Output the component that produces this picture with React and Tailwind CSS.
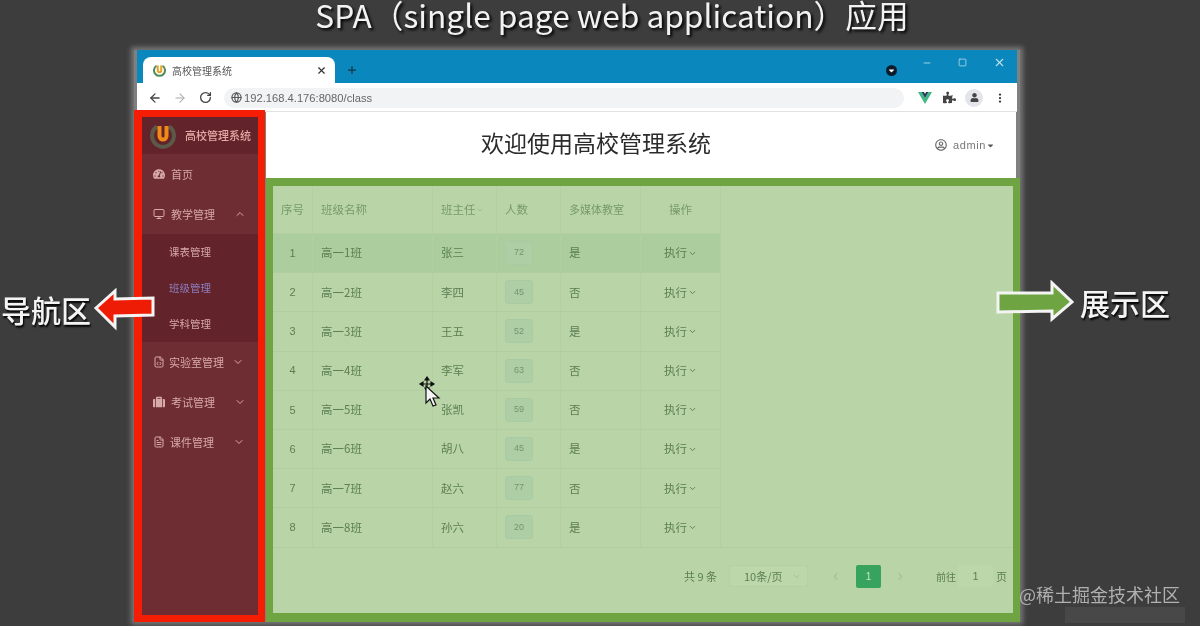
import { ArrowLeft, ArrowRight, ChevronDown, ChevronLeft, ChevronRight, ChevronUp, FileCode, FileText, Globe, Minus, Monitor, MoreVertical, Plus, RotateCw, Square, X } from 'lucide-react'
import { FaCaretDown, FaPuzzlePiece, FaRegUserCircle, FaSuitcase, FaTachometerAlt, FaUser } from 'react-icons/fa'

const cjk = "font-['Noto_Sans_CJK_SC','Noto_Sans',sans-serif]"

const rows = [
    ['1', '高一1班', '张三', '72', '是'],
    ['2', '高一2班', '李四', '45', '否'],
    ['3', '高一3班', '王五', '52', '是'],
    ['4', '高一4班', '李军', '63', '否'],
    ['5', '高一5班', '张凯', '59', '否'],
    ['6', '高一6班', '胡八', '45', '是'],
    ['7', '高一7班', '赵六', '77', '否'],
    ['8', '高一8班', '孙六', '20', '是'],
]

const Logo = ({ size }) => (
    <svg width={size} height={size} viewBox="0 0 26 26" className="shrink-0">
        <path d="M7 3.5 A11 11 0 1 0 19 3.5" fill="none" stroke="#5b5a48" strokeWidth="4" />
        <path d="M9.5 3v10a3.5 3.5 0 0 0 7 0V3" fill="none" stroke="#ef8a17" strokeWidth="4" />
    </svg>
)

const Tab = () => (
    <div className="flex h-[26px] w-[192px] items-center rounded-t-lg bg-white pl-[10px] pr-[8px]">
        <svg width="13" height="13" viewBox="0 0 26 26" className="shrink-0">
            <path d="M7 3.5 A11 11 0 1 0 19 3.5" fill="none" stroke="#4f8a5b" strokeWidth="4" />
            <path d="M9.5 3v10a3.5 3.5 0 0 0 7 0V3" fill="none" stroke="#e9a11d" strokeWidth="4" />
        </svg>
        <span className="ml-[6px] flex-1 text-[10px] text-[#555]">高校管理系统</span>
        <X size={11} strokeWidth={2.5} className="text-[#333]" />
    </div>
)

const Chrome = () => (
    <div className="mx-[3px]">
        <div className="flex h-[33px] items-end bg-[#0a87bd] pl-[6px]">
            <Tab />
            <Plus size={12} strokeWidth={2.5} className="mb-[7px] ml-[11px] text-[#12354a]" />
            <div className="mb-[7px] ml-[528px] flex h-[11px] w-[11px] items-center justify-center rounded-full bg-[#0c1c2c]">
                <FaCaretDown size={9} className="text-white" />
            </div>
            <div className="mb-[14px] ml-[25px] flex items-center gap-[26px] text-[#bfe0ee]">
                <Minus size={10} />
                <Square size={9} />
                <X size={13} />
            </div>
        </div>
        <div className="flex h-[29px] items-center border-b border-[#e2e2e2] bg-white pl-[11px] pr-[10px] pt-px">
            <ArrowLeft size={14} strokeWidth={2.2} className="text-[#444]" />
            <ArrowRight size={14} strokeWidth={1.8} className="ml-[11px] text-[#aaa]" />
            <RotateCw size={13} strokeWidth={2.4} className="ml-[12px] text-[#444]" />
            <div className="ml-[12px] flex h-[20px] w-[680px] items-center gap-[2px] rounded-full bg-[#f1f3f4] pl-[7px]">
                <Globe size={11} strokeWidth={2.5} className="text-[#555]" />
                <span className="mt-px font-['Liberation_Sans',sans-serif] text-[11.2px] text-[#666]">192.168.4.176:8080/class</span>
            </div>
            <svg width="14" height="12" viewBox="0 0 14 12" className="ml-[14px]">
                <path d="M0 0h3.5L7 6l3.5-6H14L7 12z" fill="#41b883" />
                <path d="M3.5 0H6l1 2 1-2h2.500L7 6z" fill="#21405a" />
            </svg>
            <FaPuzzlePiece size={13} className="ml-[11px] text-[#444]" />
            <div className="ml-[9px] flex h-[18px] w-[18px] items-center justify-center rounded-full bg-[#e3e5ea]">
                <FaUser size={9} className="text-[#444]" />
            </div>
            <MoreVertical size={12} strokeWidth={2.5} className="ml-[11px] text-[#333]" />
        </div>
    </div>
)

const MenuItem = ({ icon: Icon, label, open, gap = 'ml-[6px]' }) => (
    <div className="flex h-[40px] items-center pl-[11px] text-[11px] text-[#d8a9a9]">
        <Icon size={12} className="shrink-0" />
        <span className={`${gap} w-[58px] whitespace-nowrap`}>{label}</span>
        {open === true && <ChevronUp size={12} className="ml-[5px]" />}
        {open === false && <ChevronDown size={12} className="ml-[5px]" />}
    </div>
)

const Sidebar = () => (
    <aside className="-mt-[2px] w-[131px] shrink-0 border-x-[8px] border-y-[7px] border-x-[#f61d05] border-y-[#f61d05] bg-[#6e2c33] [border-right-width:7px]">
        <div className="flex h-[37px] items-center bg-[#62232a] pl-[8px]">
            <Logo size={26} />
            <span className="ml-[9px] whitespace-nowrap text-[11px] font-medium text-[#e3a9a4]">高校管理系统</span>
        </div>
        <MenuItem icon={FaTachometerAlt} label="首页" />
        <MenuItem icon={Monitor} label="教学管理" open={true} />
        <div className="bg-[#62232a] pl-[27px] text-[10.5px] text-[#d8a9a9]">
            <div className="flex h-[36px] items-center">课表管理</div>
            <div className="flex h-[36px] items-center text-[#8d7fc0]">班级管理</div>
            <div className="flex h-[36px] items-center">学科管理</div>
        </div>
        <MenuItem icon={FileCode} label="实验室管理" open={false} gap="ml-[4px]" />
        <MenuItem icon={FaSuitcase} label="考试管理" open={false} />
        <MenuItem icon={FileText} label="课件管理" open={false} gap="ml-[5px]" />
    </aside>
)

const Header = () => (
    <div className="mr-[4px] flex h-[66px] items-center bg-white pl-[215px] pr-[21px]">
        <h1 className="mb-[6px] flex-1 whitespace-nowrap text-[23px] leading-none text-[#2b2b2b]">欢迎使用高校管理系统</h1>
        <FaRegUserCircle size={12} className="text-[#666]" />
        <span className="ml-[6px] font-['Liberation_Sans',sans-serif] text-[11px] tracking-[0.6px] text-[#777]">admin</span>
        <FaCaretDown size={9} className="text-[#555]" />
    </div>
)

const cols = 'grid grid-cols-[40px_120px_64px_64px_80px_80px]'

const Table = () => (
    <div className="w-[448px] text-[11.5px] text-[#5b7f52]">
        <div className={`${cols} h-[47px] items-center text-[#769a6b]`}>
            <div className="flex h-full items-center justify-center border-r border-[#b2d0a1]">序号</div>
            <div className="flex h-full items-center border-r border-[#b2d0a1] pl-[8px]">班级名称</div>
            <div className="flex h-full items-center border-r border-[#b2d0a1] pl-[8px]">
                班主任<ChevronDown size={8} className="opacity-60" />
            </div>
            <div className="flex h-full items-center border-r border-[#b2d0a1] pl-[8px]">人数</div>
            <div className="flex h-full items-center border-r border-[#b2d0a1] pl-[8px] text-[11px]">多媒体教室</div>
            <div className="flex h-full items-center justify-center border-r border-[#b2d0a1]">操作</div>
        </div>
        {rows.map((row, i) => (
            <div key={row[0]} className={`${cols} h-[39.2px] items-center border-t border-[#b0ce9f] ${i === 0 ? 'bg-[#acce9e]' : ''}`}>
                <div className="flex h-full items-center justify-center border-r border-[#b2d0a1] font-['Liberation_Sans',sans-serif] text-[11px]">{row[0]}</div>
                <div className="flex h-full items-center border-r border-[#b2d0a1] pl-[8px]">{row[1]}</div>
                <div className="flex h-full items-center border-r border-[#b2d0a1] pl-[8px]">{row[2]}</div>
                <div className="flex h-full items-center border-r border-[#b2d0a1] pl-[8px]">
                    <span className="flex h-[24px] w-[28px] items-center justify-center rounded-[3px] border border-[#a9cba3] bg-[#aecfa6] font-['Liberation_Sans',sans-serif] text-[9px] text-[#6f9770]">{row[3]}</span>
                </div>
                <div className="flex h-full items-center border-r border-[#b2d0a1] pl-[8px]">{row[4]}</div>
                <div className="flex h-full items-center justify-center border-r border-[#b2d0a1]">
                    执行<ChevronDown size={9} strokeWidth={2.5} className="ml-[1px]" />
                </div>
            </div>
        ))}
    </div>
)

const Pagination = () => (
    <div className="flex flex-1 items-center justify-end border-t border-[#b0ce9f] pb-[8px] pr-[6px] text-[11px] text-[#5b7f52]">
        <span>共 9 条</span>
        <div className="ml-[12px] flex h-[22px] w-[79px] items-center rounded-[2px] border border-[#b3d1a3] bg-[#bcd8ab] pl-[14px] pr-[6px]">
            <span className="flex-1">10条/页</span>
            <ChevronDown size={9} className="text-[#97b98b]" />
        </div>
        <ChevronLeft size={11} strokeWidth={2.5} className="ml-[22px] text-[#a2c296]" />
        <div className="ml-[15px] flex h-[23px] w-[25px] items-center justify-center rounded-[2px] bg-[#37a35c] font-['Liberation_Sans',sans-serif] text-[10px] text-[#c7e5c4]">1</div>
        <ChevronRight size={11} strokeWidth={2.5} className="ml-[14px] text-[#a2c296]" />
        <span className="ml-[30px] text-[10px]">前往</span>
        <div className="ml-[2px] flex h-[22px] w-[35px] items-center justify-center rounded-[2px] bg-[#bcd8ab] font-['Liberation_Sans',sans-serif] text-[11px]">1</div>
        <span className="ml-[3px]">页</span>
    </div>
)

const App = () => (
    <div className={`relative flex h-[626px] w-[1200px] flex-col overflow-hidden bg-[#3d3d3d] blur-[0.4px] ${cjk}`}>
        <div className="flex h-[50px] shrink-0 justify-center pl-[24px]">
            <h1 className="whitespace-nowrap text-[31.7px] leading-[29px] text-[#f2f2f2] [text-shadow:2px_2px_3px_#000]">SPA（single page web application）应用</h1>
        </div>
        <div className="flex h-[572px] shrink-0">
            <div className="flex w-[134px] shrink-0 items-center justify-end pb-[54px] pr-[43px]">
                <span className="whitespace-nowrap text-[30px] font-medium leading-none text-[#f4f4f4] [text-shadow:1px_2px_2px_#000]">导航区</span>
            </div>
            <div className="flex w-[886px] shrink-0 flex-col bg-[#808080] shadow-[0_0_5px_3px_rgba(190,190,190,0.45)]">
                <Chrome />
                <div className="flex min-h-0 flex-1">
                    <Sidebar />
                    <div className="flex min-w-0 flex-1 flex-col pl-px">
                        <Header />
                        <div className="flex min-h-0 flex-1 flex-col border-x-[7px] border-t-[8px] border-b-[9px] border-[#6ea542] bg-[#b9d5a8]">
                            <Table />
                            <Pagination />
                        </div>
                    </div>
                </div>
            </div>
            <div className="flex flex-1 items-center pb-[68px] pl-[60px]">
                <span className="whitespace-nowrap text-[30px] font-medium leading-none text-[#f4f4f4] [text-shadow:1px_2px_2px_#000]">展示区</span>
            </div>
        </div>

        <svg width="64" height="44" viewBox="0 0 64 44" className="absolute left-[93px] top-[288px]">
            <path d="M3 20 L22 3 V11 L60 10 V27 L22 28 V39 Z" fill="#ef1c05" stroke="#f4f4f4" strokeWidth="3" />
        </svg>
        <svg width="80" height="44" viewBox="0 0 80 44" className="absolute left-[995px] top-[280px]">
            <path d="M3 13 L57 13 V3 L77 22 L57 39 V31 L3 32 Z" fill="#6ea542" stroke="#f4f4f4" strokeWidth="3" />
        </svg>

        <svg width="26" height="32" viewBox="0 0 26 32" className="absolute left-[417px] top-[376px]">
            <path d="M10 1v14M3 8h14M10 1 8 4h4zM10 15l-2-3h4zM3 8l3-2v4zM17 8l-3-2v4z" stroke="#111" strokeWidth="1.2" fill="#111" />
            <path d="M9 10v17l4-4 3 7 3-1-3-7h6z" fill="#f4f4f4" stroke="#111" strokeWidth="1.2" />
        </svg>

        <div className="absolute left-[1065px] top-[607px] h-[16px] w-[120px] bg-[#484848]" />
        <span className="absolute left-[1019px] top-[582px] text-[18px] leading-[24px] text-[#b0b0b0]">@稀土掘金技术社区</span>
    </div>
)

export default App
